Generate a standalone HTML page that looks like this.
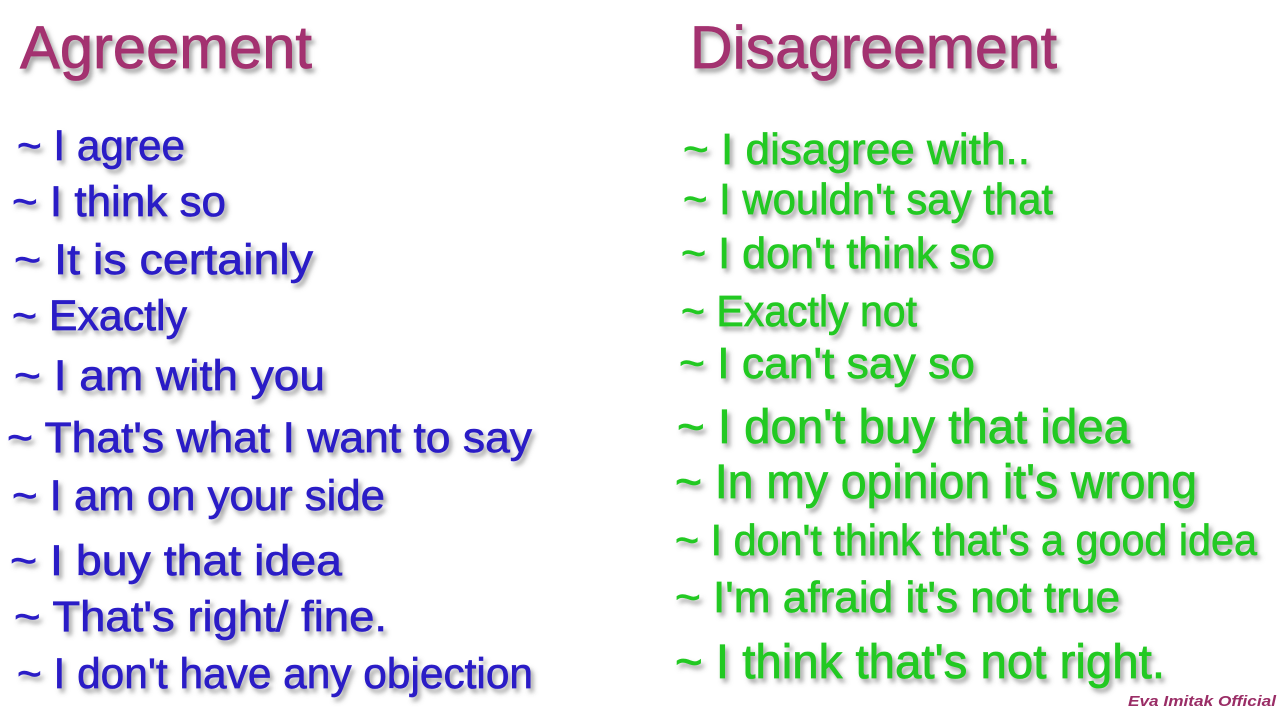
<!DOCTYPE html>
<html><head><meta charset="utf-8"><style>
html,body{margin:0;padding:0;background:#fff;width:1280px;height:720px;overflow:hidden}
svg{display:block}
text{font-family:"Liberation Sans",sans-serif}
.t{fill:#a3306f;stroke:#a3306f;stroke-width:0.8;font-size:60px}
.b{fill:#2b1cc6;stroke:#2b1cc6;stroke-width:0.7;font-size:43px}
.g{fill:#22c922;stroke:#22c922;stroke-width:0.7;font-size:44px}
.h{fill:#22c922;stroke:#22c922;stroke-width:0.8;font-size:48px}
</style></head><body>
<svg width="1280" height="720" viewBox="0 0 1280 720">
<defs><filter id="s" x="-5%" y="-30%" width="110%" height="160%"><feDropShadow dx="3" dy="4" stdDeviation="2.5" flood-color="#555" flood-opacity="0.55"/></filter></defs>
<g filter="url(#s)">
<text class="t" x="20" y="68" textLength="292" lengthAdjust="spacingAndGlyphs">Agreement</text>
<text class="t" x="690" y="68" textLength="367" lengthAdjust="spacingAndGlyphs">Disagreement</text>

<text class="b" x="17" y="160" textLength="168" lengthAdjust="spacingAndGlyphs">~ I agree</text>
<text class="b" x="12" y="216" textLength="214" lengthAdjust="spacingAndGlyphs">~ I think so</text>
<text class="b" x="14" y="274" textLength="299" lengthAdjust="spacingAndGlyphs">~ It is certainly</text>
<text class="b" x="12" y="330" textLength="175" lengthAdjust="spacingAndGlyphs">~ Exactly</text>
<text class="b" x="14" y="390" textLength="311" lengthAdjust="spacingAndGlyphs">~ I am with you</text>
<text class="b" x="7" y="452" textLength="525" lengthAdjust="spacingAndGlyphs">~ That's what I want to say</text>
<text class="b" x="12" y="510" textLength="373" lengthAdjust="spacingAndGlyphs">~ I am on your side</text>
<text class="b" x="10" y="575" textLength="332" lengthAdjust="spacingAndGlyphs">~ I buy that idea</text>
<text class="b" x="14" y="631" textLength="373" lengthAdjust="spacingAndGlyphs">~ That's right/ fine.</text>
<text class="b" x="17" y="688" textLength="516" lengthAdjust="spacingAndGlyphs">~ I don't have any objection</text>

<text class="g" x="683" y="164" textLength="347" lengthAdjust="spacingAndGlyphs">~ I disagree with..</text>
<text class="g" x="683" y="214" textLength="370" lengthAdjust="spacingAndGlyphs">~ I wouldn't say that</text>
<text class="g" x="681" y="268" textLength="314" lengthAdjust="spacingAndGlyphs">~ I don't think so</text>
<text class="g" x="681" y="326" textLength="236" lengthAdjust="spacingAndGlyphs">~ Exactly not</text>
<text class="g" x="679" y="378" textLength="296" lengthAdjust="spacingAndGlyphs">~ I can't say so</text>
<text class="h" x="677" y="443" textLength="453" lengthAdjust="spacingAndGlyphs">~ I don't buy that idea</text>
<text class="h" x="675" y="498" textLength="522" lengthAdjust="spacingAndGlyphs">~ In my opinion it's wrong</text>
<text class="g" x="675" y="555" textLength="582" lengthAdjust="spacingAndGlyphs">~ I don't think that's a good idea</text>
<text class="g" x="675" y="612" textLength="445" lengthAdjust="spacingAndGlyphs">~ I'm afraid it's not true</text>
<text class="h" x="675" y="678" textLength="490" lengthAdjust="spacingAndGlyphs">~ I think that's not right.</text>
</g>
<text x="1128" y="706" font-family="'Liberation Serif',serif" font-style="italic" font-weight="bold" font-size="15" fill="#9a2d66" textLength="148" lengthAdjust="spacingAndGlyphs">Eva Imitak Official</text>
</svg>
</body></html>
